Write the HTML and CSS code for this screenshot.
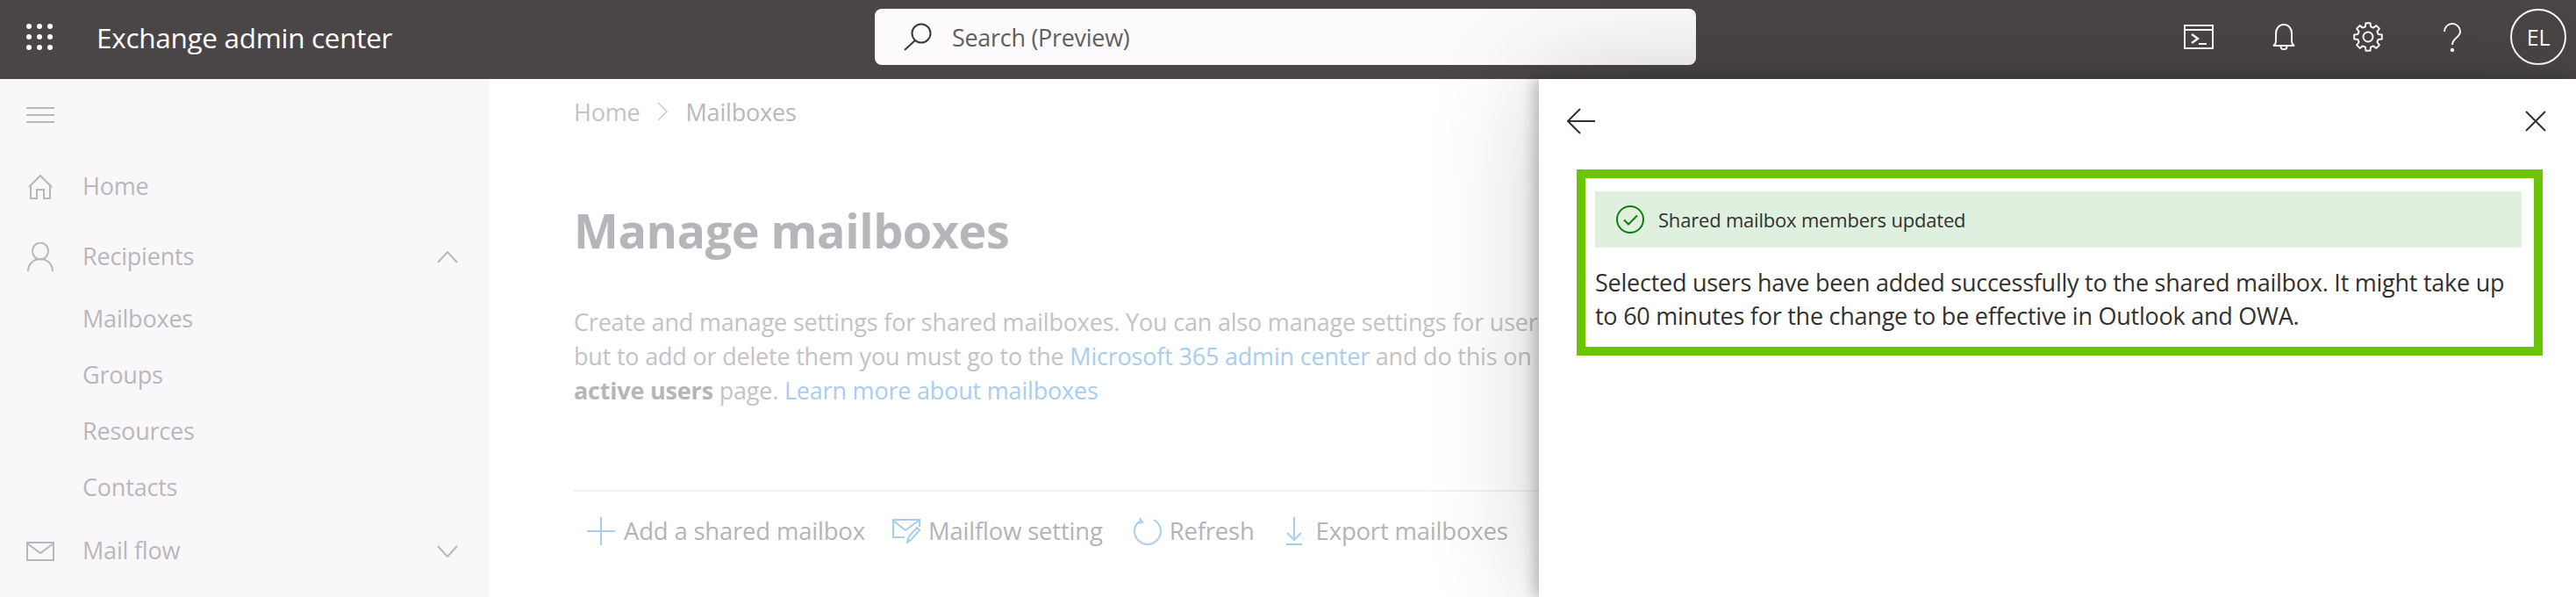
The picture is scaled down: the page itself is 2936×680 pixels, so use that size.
FILE: index.html
```html
<!DOCTYPE html>
<html lang="en">
<head>
    <meta charset="UTF-8">
    <meta name="viewport" content="width=device-width, initial-scale=1.0">
    <title>Exchange admin center</title>
    <link rel="stylesheet" href="styles.css">
</head>
<body>
    <header class="topbar">
        <svg class="waffle" width="30" height="30" viewBox="0 0 30 30" fill="#fff">
            <circle cx="3" cy="3" r="3"/><circle cx="15" cy="3" r="3"/><circle cx="27" cy="3" r="3"/>
            <circle cx="3" cy="15" r="3"/><circle cx="15" cy="15" r="3"/><circle cx="27" cy="15" r="3"/>
            <circle cx="3" cy="27" r="3"/><circle cx="15" cy="27" r="3"/><circle cx="27" cy="27" r="3"/>
        </svg>
        <div class="app-title">Exchange admin center</div>
        <div class="search">
            <svg width="34" height="32" viewBox="0 0 34 32" fill="none" stroke="#3b3a39" stroke-width="2">
                <circle cx="21" cy="12" r="10.5"/>
                <path d="M14 20 L2 31"/>
            </svg>
            <span>Search (Preview)</span>
        </div>
        <div class="top-icons">
            <svg class="icon-shell" width="34" height="28" viewBox="0 0 34 28" fill="none" stroke="#fff" stroke-width="2">
                <path d="M1 1h32v26H1z"/>
                <path d="M1 6h32"/>
                <path d="M9 11l7 5-7 5" stroke-width="2.4"/>
                <path d="M17 22h9"/>
            </svg>
            <svg class="icon-bell" width="26" height="30" viewBox="0 0 26 30" fill="none" stroke="#fff" stroke-width="2">
                <path d="M1 25c2-1 3-3 3-6v-8c0-6 4-10 9-10s9 4 9 10v8c0 3 1 5 3 6z"/>
                <path d="M9.500 25.500c0 5 7 5 7 0"/>
            </svg>
            <svg class="icon-gear" width="34" height="34" viewBox="-17 -17 34 34" fill="none" stroke="#fff" stroke-width="2" stroke-linejoin="round">
                <polygon points="2.500,-15.800 3.100,-11.600 6,-10.400 9.400,-12.900 12.900,-9.400 10.400,-6 11.600,-3.100 15.800,-2.500 15.800,2.500 11.600,3.100 10.400,6 12.900,9.400 9.400,12.900 6,10.400 3.100,11.600 2.500,15.800 -2.500,15.800 -3.100,11.600 -6,10.400 -9.400,12.900 -12.900,9.400 -10.400,6 -11.600,3.100 -15.800,2.500 -15.800,-2.500 -11.600,-3.100 -10.400,-6 -12.900,-9.400 -9.400,-12.900 -6,-10.400 -3.100,-11.600 -2.500,-15.800"/>
                <circle r="5.500"/>
            </svg>
            <svg class="icon-help" width="20" height="33" viewBox="0 0 20 33" fill="none" stroke="#fff" stroke-width="2">
                <path d="M1 10c0-5 4-9 9-9s9 4 9 9c0 7-9 7-9 15"/>
                <circle cx="10" cy="31" r="1.200" fill="#fff"/>
            </svg>
            <div class="avatar">EL</div>
        </div>
    </header>

    <div class="layout">
        <nav class="sidebar">
            <svg class="hamburger" width="32" height="18" viewBox="0 0 32 18" stroke="#b9b7bb" stroke-width="2">
                <path d="M0 1h32M0 9h32M0 17h32"/>
            </svg>
            <div class="nav-item home-item">
                <svg width="32" height="28" viewBox="0 0 32 28" fill="none" stroke="#b9b7bb" stroke-width="2">
                    <path d="M3 14L16 1l13 13"/>
                    <path d="M5 12v15h7V17h8v10h7V12"/>
                </svg>
                <span>Home</span>
            </div>
            <div class="nav-item">
                <svg width="32" height="34" viewBox="0 0 32 34" fill="none" stroke="#b9b7bb" stroke-width="2">
                    <ellipse cx="16" cy="10" rx="9" ry="9.500"/>
                    <path d="M2 33c0-8 6-14 14-14s14 6 14 14"/>
                </svg>
                <span>Recipients</span>
                <svg class="chevron" width="24" height="14" viewBox="0 0 24 14" fill="none" stroke="#b9b7bb" stroke-width="2">
                    <path d="M1 13L12 1l11 12"/>
                </svg>
            </div>
            <div class="sub-item">Mailboxes</div>
            <div class="sub-item">Groups</div>
            <div class="sub-item">Resources</div>
            <div class="sub-item">Contacts</div>
            <div class="nav-item mail-item">
                <svg width="32" height="22" viewBox="0 0 32 22" fill="none" stroke="#b9b7bb" stroke-width="2">
                    <path d="M1 1h30v20H1z"/>
                    <path d="M1 2l15 11L31 2"/>
                </svg>
                <span>Mail flow</span>
                <svg class="chevron" width="24" height="14" viewBox="0 0 24 14" fill="none" stroke="#b9b7bb" stroke-width="2">
                    <path d="M1 1l11 12L23 1"/>
                </svg>
            </div>
        </nav>

        <main class="content">
            <div class="breadcrumb">
                <span>Home</span>
                <svg width="12" height="22" viewBox="0 0 12 22" fill="none" stroke="#cfcdd0" stroke-width="1.500">
                    <path d="M1 1l10 10L1 21"/>
                </svg>
                <span class="crumb-current">Mailboxes</span>
            </div>
            <h1>Manage mailboxes</h1>
            <p class="intro">
                Create and manage settings for shared mailboxes. You can also manage settings for user<br>
                but to add or delete them you must go to the <a href="#">Microsoft 365 admin center</a> and do this on<br>
                <b>active users</b> page. <a href="#">Learn more about mailboxes</a>
            </p>
            <div class="toolbar">
                <div class="tool tool-add">
                    <svg width="32" height="32" viewBox="0 0 32 32" stroke="#a9cdf1" stroke-width="2">
                        <path d="M16 0v32M0 16h32"/>
                    </svg>
                    <span>Add a shared mailbox</span>
                </div>
                <div class="tool tool-flow">
                    <svg width="32" height="28" viewBox="0 0 32 28" fill="none" stroke="#a9cdf1" stroke-width="2">
                        <path d="M14 21H1V1h30v8"/>
                        <path d="M1 2l14 11L30 2"/>
                        <path d="M17 27l2-7 9-10 3 3-9 10z"/>
                    </svg>
                    <span>Mailflow setting</span>
                </div>
                <div class="tool tool-refresh">
                    <svg width="32" height="32" viewBox="0 0 32 32" fill="none" stroke="#a9cdf1" stroke-width="2">
                        <path d="M8 4C3 7 1 11 1 16c0 8 7 15 15 15s15-7 15-15c0-5-3-10-8-13"/>
                        <path d="M7 1l3 5-6 1"/>
                    </svg>
                    <span>Refresh</span>
                </div>
                <div class="tool tool-export">
                    <svg width="20" height="32" viewBox="0 0 20 32" fill="none" stroke="#a9cdf1" stroke-width="2">
                        <path d="M10 0v26M2 18l8 8 8-8"/>
                        <path d="M1 31h18"/>
                    </svg>
                    <span>Export mailboxes</span>
                </div>
            </div>
        </main>
    </div>

    <aside class="panel">
        <div class="panel-head">
            <svg width="32" height="30" viewBox="0 0 32 30" fill="none" stroke="#323130" stroke-width="2">
                <path d="M32 15H1M15 1L1 15l14 14"/>
            </svg>
            <svg width="24" height="24" viewBox="0 0 24 24" fill="none" stroke="#323130" stroke-width="2">
                <path d="M1 1l22 22M23 1L1 23"/>
            </svg>
        </div>
        <div class="highlight">
            <div class="banner">
                <svg width="32" height="32" viewBox="0 0 32 32" fill="none" stroke="#107c10" stroke-width="2">
                    <circle cx="16" cy="16" r="15"/>
                    <path d="M9 16.500l5 5 10-10"/>
                </svg>
                <span>Shared mailbox members updated</span>
            </div>
            <p class="message">Selected users have been added successfully to the shared mailbox. It might take up to 60 minutes for the change to be effective in Outlook and OWA.</p>
        </div>
    </aside>
</body>
</html>
```

FILE: styles.css
```css
* {
    margin: 0;
    padding: 0;
    box-sizing: border-box;
    font-family: "Open Sans", "Noto Sans", sans-serif;
}
html, body {
    height: 680px;
    overflow: hidden;
}
body {
    background: #fff;
    position: relative;
    font-size: 27px;
    letter-spacing: -0.2px;
}
svg {
    flex: none;
    display: block;
}

/* top bar */
.topbar {
    height: 90px;
    background: #4a4647;
    color: #fff;
    display: flex;
    align-items: center;
    padding: 0 0 6px 30px;
}
.app-title {
    margin-left: 50px;
    width: 887px;
    font-size: 31.500px;
    font-weight: 500;
    letter-spacing: -0.3px;
}
.search {
    width: 936px;
    height: 64px;
    background: #fcfafc;
    border-radius: 8px;
    display: flex;
    align-items: center;
    gap: 22px;
    padding-left: 32px;
    color: #605e5f;
    letter-spacing: -0.3px;
}
.top-icons {
    display: flex;
    align-items: center;
    margin-left: 556px;
}
.icon-bell {
    margin-left: 67px;
}
.icon-gear {
    margin-left: 66px;
}
.icon-help {
    margin-left: 69px;
}
.avatar {
    margin-left: 56px;
    width: 64px;
    height: 64px;
    border: 2px solid #fff;
    border-radius: 50%;
    display: flex;
    align-items: center;
    justify-content: center;
    font-size: 25px;
}

/* sidebar and page */
.layout {
    display: flex;
    height: 590px;
}
.sidebar {
    width: 558px;
    background: #f9f7fa;
    color: #b9b7bb;
    padding-top: 32px;
}
.hamburger {
    margin-left: 30px;
}
.nav-item {
    height: 64px;
    display: flex;
    align-items: center;
    gap: 32px;
    padding-left: 30px;
    margin-top: 16px;
}
.nav-item span {
    padding-bottom: 4px;
}
.home-item {
    margin-top: 41px;
}
.nav-item .chevron {
    margin-left: auto;
    margin-right: 36px;
}
.sub-item {
    height: 64px;
    line-height: 60px;
    padding-left: 94px;
}
.nav-item + .sub-item {
    margin-top: 8px;
}
.mail-item {
    margin-top: 7px;
}

.content {
    flex: 1;
    padding: 17px 0 0 96px;
    color: #c4c2c5;
}
.breadcrumb {
    display: flex;
    align-items: center;
    height: 40px;
    gap: 19px;
}
.crumb-current {
    margin-left: 2px;
    color: #b9b7bb;
}
h1 {
    margin-top: 80px;
    font-size: 54px;
    font-weight: 700;
    line-height: 70px;
    letter-spacing: -0.5px;
    color: #b7b5b9;
}
.intro {
    margin-top: 50px;
    line-height: 39px;
    white-space: nowrap;
}
.intro a {
    color: #a9cdf1;
    text-decoration: none;
}
.intro b {
    color: #b7b5b9;
}
.toolbar {
    margin-top: 94px;
    border-top: 2px solid #f3f2f3;
    padding: 26px 0 0 15px;
    display: flex;
    align-items: center;
    color: #b5b3b7;
    font-size: 27.500px;
    font-weight: 500;
}
.tool {
    display: flex;
    align-items: center;
    gap: 9px;
}
.tool-add {
    gap: 10px;
}
.tool-flow {
    margin-left: 31px;
}
.tool-refresh {
    margin-left: 35px;
}
.tool-export {
    margin-left: 35px;
    gap: 15px;
}

/* side panel, lies over the page */
.panel {
    position: absolute;
    top: 90px;
    right: 0;
    bottom: 0;
    width: 1182px;
    background: #fff;
    box-shadow: -6px 0 14px rgba(0, 0, 0, 0.22), 0 0 120px rgba(0, 0, 0, 0.2);
    padding: 33px 34px 0 32px;
    color: #323130;
}
.panel-head {
    display: flex;
    align-items: center;
    justify-content: space-between;
    height: 30px;
}
.highlight {
    margin: 40px 4px 0 11px;
    border: 10px solid #6cc504;
    padding: 15px 14px 0 11px;
    height: 212px;
}
.banner {
    height: 64px;
    background: #dff0de;
    display: flex;
    align-items: center;
    gap: 16px;
    padding-left: 24px;
    font-size: 22px;
}
.message {
    margin-top: 21px;
    line-height: 38px;
    letter-spacing: -0.25px;
}
```
